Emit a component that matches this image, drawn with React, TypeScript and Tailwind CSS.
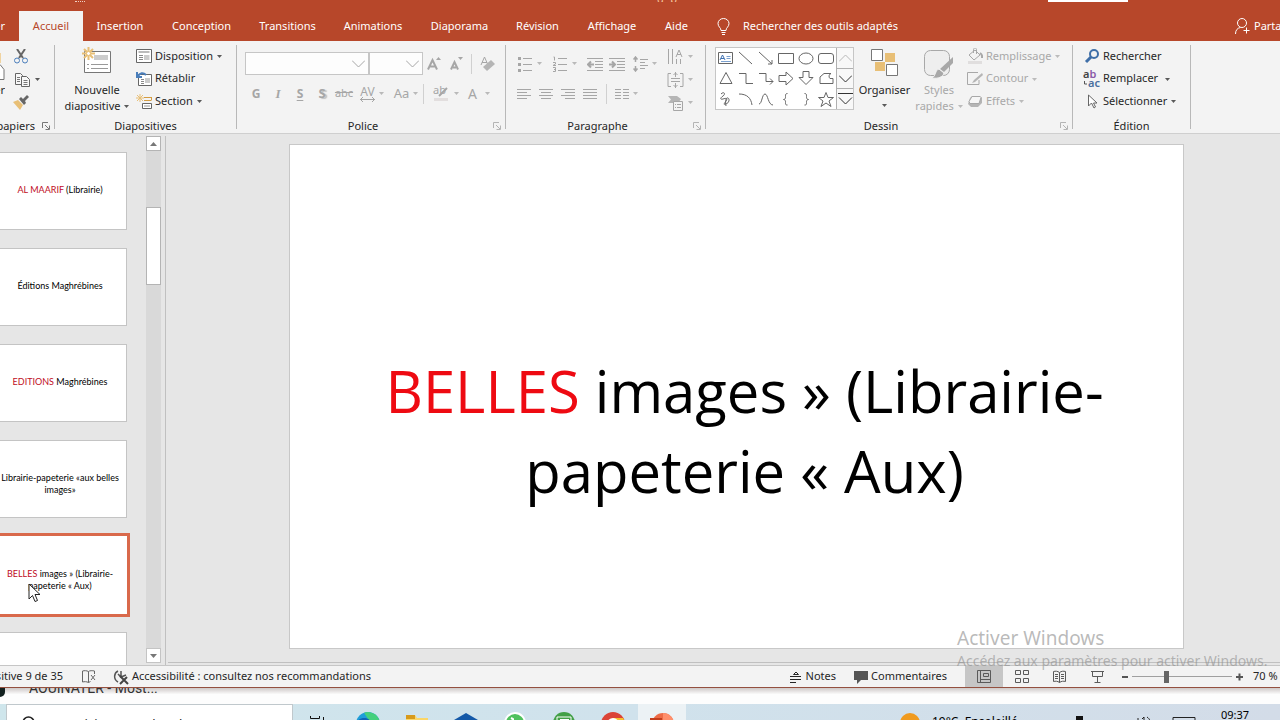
import type { ReactNode } from 'react';

const tabs = [
    { name: 'Insertion', width: 'w-[74px]' },
    { name: 'Conception', width: 'w-[89px]' },
    { name: 'Transitions', width: 'w-[83px]' },
    { name: 'Animations', width: 'w-[88px]' },
    { name: 'Diaporama', width: 'w-[85px]' },
    { name: 'Révision', width: 'w-[71px]' },
    { name: 'Affichage', width: 'w-[78px]' },
    { name: 'Aide', width: 'w-[51px]' },
];

const slides = [
    { red: 'AL MAARIF', lines: [' (Librairie)'] },
    { red: '', lines: ['Éditions Maghrébines'] },
    { red: 'EDITIONS', lines: [' Maghrébines'] },
    { red: '', lines: ['Librairie-papeterie «aux belles', 'images»'] },
    { red: 'BELLES', lines: [' images » (Librairie-', 'papeterie « Aux)'], selected: true },
    { red: '', lines: [''] },
];

// 16x16 outlines of the shape gallery, row by row
const shapes = [
    { name: 'Ligne', d: 'M1 2l13 12' },
    { name: 'Flèche', d: 'M1 2l13 12M14 10v4h-4' },
    { name: 'Rectangle', d: 'M.5 3.5h15v10H.5z' },
    { name: 'Ellipse', d: 'M1 8.5a7 5.5 0 1 0 14 0a7 5.5 0 1 0-14 0' },
    { name: 'Rectangle à coins arrondis', d: 'M3 3.5h10q2.500 0 2.500 2.500v5q0 2.500-2.500 2.500H3Q.5 13.500.5 11V6Q.5 3.500 3 3.500z' },
    { name: 'Triangle', d: 'M8 2.5l6 11H2z' },
    { name: 'Connecteur en angle', d: 'M1 3.5h7v10h7' },
    { name: 'Connecteur avec flèche', d: 'M1 3.5h7v8h7M12 8.5l3 3-3 3' },
    { name: 'Flèche droite', d: 'M1 5.5h7V2l7 6.5-7 6.5v-3.500H1z' },
    { name: 'Flèche vers le bas', d: 'M5 1.500h6v6h4l-7 7-7-7h4z' },
    { name: 'Forme libre', d: 'M6 3.500h7a3 3 0 0 0-1 5h3v5H2V7z' },
    { name: 'Dessin à main levée', d: 'M3 3c3-3 5 0 2 2s-3 4 0 3 5-1 3 2-3 4 0 3 4-5 2-6-3 3-2 8' },
    { name: 'Arc', d: 'M1 3c8 0 12 4 13 11' },
    { name: 'Courbe', d: 'M1 13c3 0 3-10 6-10s3 11 8 11' },
    { name: 'Accolade ouvrante', d: 'M9.500 2.500c-2 0-2 1-2 3s0 2.500-2 3c2 .5 2 1 2 3s0 2.500 2 2.500' },
    { name: 'Accolade fermante', d: 'M6.500 2.500c2 0 2 1 2 3s0 2.500 2 3c-2 .5-2 1-2 3s0 2.500-2 2.500' },
    { name: 'Étoile', d: 'M8 1.500l2 5h5.500l-4.500 3.500 2 5.500-5-3.500-5 3.500 2-5.500L.5 6.500H6z' },
];

function Icon({ children, w = 16, h = 16 }: { children: ReactNode; w?: number; h?: number }) {
    return (
        <svg width={w} height={h} viewBox={`0 0 ${w} ${h}`} fill="none" stroke="currentColor" className="shrink-0" aria-hidden="true">
            {children}
        </svg>
    );
}

function Caret() {
    return (
        <svg width="5" height="3" viewBox="0 0 5 3" className="shrink-0" aria-hidden="true">
            <path d="M0 0h5L2.500 3z" fill="currentColor" opacity=".75" />
        </svg>
    );
}

function Launcher({ dim = false }: { dim?: boolean }) {
    return (
        <button type="button" aria-label="Options" className={`mr-1 ${dim ? 'text-[#b4b4b4]' : 'text-[#777777]'}`}>
            <Icon w={8} h={8}>
                <path d="M.5 6V.5H6M3 3l4 4M7.500 3.500v4h-4" />
            </Icon>
        </button>
    );
}

function Group({ label, launcher, width, children }: { label: ReactNode; launcher?: ReactNode; width: string; children: ReactNode }) {
    return (
        <section className={`flex shrink-0 items-start pt-1 ${width}`}>
            <div className="flex min-w-0 flex-1 flex-col">
                <div className="flex h-[69px] pb-px">{children}</div>
                <div className="flex h-6 items-center">
                    <h2 className="min-w-0 flex-1 pr-1 text-center">{label}</h2>
                    {launcher}
                </div>
            </div>
            <div className="h-[84px] w-px shrink-0 bg-[#b8b8b8]" />
        </section>
    );
}

function RowButton({ icon, label, caret = false, gap = 'gap-1' }: { icon: ReactNode; label: string; caret?: boolean; gap?: string }) {
    return (
        <button type="button" className={`flex h-[23px] items-center whitespace-nowrap ${gap}`}>
            <span className="-mr-px flex w-4 justify-center">{icon}</span>
            <span className="pb-px">{label}</span>
            {caret && <Caret />}
        </button>
    );
}

function Tool({ label, width = 'w-[22px]', caret = false, children }: { label: string; width?: string; caret?: boolean; children: ReactNode }) {
    return (
        <button type="button" aria-label={label} className={`flex h-[23px] shrink-0 items-center justify-center gap-1 ${width}`}>
            {children}
            {caret && <Caret />}
        </button>
    );
}

function Combo({ label, width }: { label: string; width: string }) {
    return (
        <div className={`relative h-[23px] shrink-0 ${width}`}>
            <select aria-label={label} className="h-full w-full appearance-none border border-[#c6c6c6] bg-[#fdfdfd] outline-none" />
            <span className="pointer-events-none absolute top-2 right-1">
                <Icon w={13} h={8}>
                    <path d="M0 .5l6.500 6.500L13 .5" />
                </Icon>
            </span>
        </div>
    );
}

function Header() {
    return (
        <header className="shrink-0 bg-[#b7472a] text-white">
            <div className="flex h-[11px] items-start">
                <div className="ml-[75px] h-[2px] w-[10px] border-b border-dotted border-[#f0d0c4]" />
                <div className="ml-[572px] flex h-[2px] w-5 items-end justify-between overflow-hidden leading-[6px] text-[#f6c7a0]">
                    <span>g</span>
                    <span>p</span>
                </div>
                <div className="mr-[152px] ml-auto h-[2px] w-20 bg-white" />
            </div>
            <nav className="flex h-[30px] items-stretch">
                <a href="#fichier" className="flex w-[19px] items-center justify-end overflow-hidden pr-[14px]">
                    Fichier
                </a>
                <a href="#accueil" className="flex w-16 items-center justify-center bg-[#f3f3f3] text-[#b7472a]">
                    Accueil
                </a>
                {tabs.map((tab) => (
                    <a key={tab.name} href="#ruban" className={`flex shrink-0 items-center justify-center ${tab.width}`}>
                        {tab.name}
                    </a>
                ))}
                <button type="button" className="ml-[15px] flex items-center gap-[13px]">
                    <Icon w={13} h={17}>
                        <path d="M4 12.500c0-3-3-3.500-3-7a5.500 5 0 0 1 11 0c0 3.500-3 4-3 7zM4.500 14.500h4M5 16.500h3" />
                    </Icon>
                    Rechercher des outils adaptés
                </button>
                <button type="button" className="ml-auto flex w-[45px] items-center gap-1 overflow-hidden">
                    <Icon w={15} h={16}>
                        <circle cx="7" cy="5" r="4.500" />
                        <path d="M.5 16c0-4 2-6 5-6.500M11.500 9.500v6M8.500 12.500h6" />
                    </Icon>
                    Partager
                </button>
            </nav>
        </header>
    );
}

function Clipboard() {
    return (
        <Group width="w-[55px]" launcher={<Launcher />} label={<span className="flex w-[35px] justify-end overflow-hidden whitespace-nowrap">Presse-papiers</span>}>
            <button type="button" className="flex w-[5px] flex-col items-end overflow-hidden pt-2">
                <Icon w={12} h={28}>
                    <path d="M6 0h2v10H6z" fill="#f0d3a0" stroke="none" />
                    <path d="M-4 11.500h11l4 5v10H-4" fill="#fff" stroke="#777" />
                </Icon>
                <span className="pt-px">Coller</span>
            </button>
            <div className="flex flex-col pl-2">
                <Tool label="Couper" width="w-4">
                    <Icon>
                        <path d="M4 0l6 9M12 0L6 9" stroke="#666" strokeWidth="2" />
                        <circle cx="4" cy="11.500" r="2.500" stroke="#4a7ebb" />
                        <circle cx="12" cy="11.500" r="2.500" stroke="#4a7ebb" />
                    </Icon>
                </Tool>
                <Tool label="Copier" width="w-7" caret>
                    <Icon>
                        <path d="M.5 1.500h5l2 2v9h-7z" fill="#f8f8f8" stroke="#666" />
                        <path d="M6.500 4.500h5l3 3v7h-8z" fill="#f8f8f8" stroke="#666" />
                        <path d="M2 5.500h3M2 7.500h3M2 9.500h3M8.500 8.500h4M8.500 10.500h4M8.500 12.500h4" stroke="#777" />
                    </Icon>
                </Tool>
                <Tool label="Reproduire la mise en forme" width="w-4">
                    <Icon>
                        <path d="M0 7l5-2 5 5-3 5z" fill="#e8bf76" stroke="none" />
                        <path d="M6 4l2-2 2 2 4-4 2 2-4 4 1 2-2 2z" fill="#666" stroke="none" />
                    </Icon>
                </Tool>
            </div>
        </Group>
    );
}

function SlidesGroup() {
    return (
        <Group width="w-[182px]" label={<span className="pl-1">Diapositives</span>}>
            <button type="button" className="ml-1 flex w-[76px] flex-col items-center pt-0.5 leading-4">
                <Icon w={30} h={28}>
                    <path d="M2.500 4.500h26v21h-26z" fill="#fff" stroke="#777" />
                    <path d="M12 8h14v5H12z" fill="#ccc" stroke="none" />
                    <path d="M5 17.500h2M9 17.500h17M5 21.500h2M9 21.500h17" stroke="#999" />
                    <path d="M6.500 0v13M0 6.500h13M2 2l9 9M11 2l-9 9" stroke="#e8bf76" strokeWidth="2" />
                    <circle cx="6.500" cy="6.500" r="2" fill="#fff" stroke="#e8bf76" />
                </Icon>
                <span className="pt-[7px]">Nouvelle</span>
                <span className="flex items-center gap-1">
                    diapositive
                    <Caret />
                </span>
            </button>
            <div className="flex flex-col items-start pl-px">
                <RowButton
                    label="Disposition"
                    caret
                    icon={
                        <Icon>
                            <path d="M.5 1.500h15v13H.5z" fill="#fff" stroke="#666" />
                            <path d="M2.500 4h11" stroke="#bbb" strokeWidth="2" />
                            <path d="M8 7h5.500v5H8z" fill="#ccc" stroke="none" />
                            <path d="M3 7.500h4M3 9.500h4M3 11.500h4" stroke="#888" />
                        </Icon>
                    }
                />
                <RowButton
                    label="Rétablir"
                    icon={
                        <Icon>
                            <path d="M2.500 3.500h13v11h-13z" fill="#fff" stroke="#666" />
                            <path d="M9 7h5v5H9z" fill="#ccc" stroke="none" />
                            <path d="M5 8.500h3M5 10.500h3M5 12.500h3" stroke="#888" />
                            <path d="M1 1v5h5M1.500 5.500C4 2 7 1 10 4" stroke="#4a7ebb" strokeWidth="2" />
                        </Icon>
                    }
                />
                <RowButton
                    label="Section"
                    caret
                    icon={
                        <Icon>
                            <path d="M4 0v8M0 4h8M1 1l6 6M7 1L1 7" stroke="#e8bf76" />
                            <path d="M8 3.500h8M8 6.500h7M15.500 3.500v3" stroke="#d39c43" />
                            <path d="M6.500 9.500h9v5h-9z" fill="#fff" stroke="#666" />
                            <path d="M8 12h6" stroke="#ccc" strokeWidth="2" />
                        </Icon>
                    }
                />
            </div>
        </Group>
    );
}

function FontGroup() {
    return (
        <Group width="w-[269px]" label="Police" launcher={<Launcher dim />}>
            <div className="flex flex-col gap-[7px] pt-[7px] pl-2 text-[#a6a6a6]">
                <div className="flex items-center">
                    <Combo label="Police" width="w-[124px]" />
                    <Combo label="Taille de police" width="w-[54px]" />
                    <Tool label="Agrandir la police">
                        <Icon>
                            <path d="M2 13.500L6.500 4 11 13.500M4 10.500h5" strokeWidth="2" />
                            <path d="M10 4h5l-2.500-3z" fill="currentColor" stroke="none" />
                        </Icon>
                    </Tool>
                    <Tool label="Réduire la police">
                        <Icon>
                            <path d="M3 13.500L6.500 6l3.500 7.500M5 11.500h3" strokeWidth="2" />
                            <path d="M10 1h5l-2.500 3z" fill="currentColor" stroke="none" />
                        </Icon>
                    </Tool>
                    <div className="ml-1 h-5 w-px bg-[#d0d0d0]" />
                    <Tool label="Effacer la mise en forme" width="w-8">
                        <Icon>
                            <path d="M1 9l3.500-8L8 9M2 6.500h5" />
                            <path d="M3 11l8-7 4 4-8 7z" fill="#b5b5b5" stroke="none" />
                        </Icon>
                    </Tool>
                </div>
                <div className="flex items-center text-[12px]">
                    <Tool label="Gras"><b>G</b></Tool>
                    <Tool label="Italique"><i className="font-['Liberation_Serif',serif] text-[13px] font-bold">I</i></Tool>
                    <Tool label="Souligné"><b className="underline underline-offset-2">S</b></Tool>
                    <Tool label="Ombre"><b className="text-[13px] text-shadow-[2px_1px_1px_#c0c0c0]">S</b></Tool>
                    <Tool label="Barré"><span className="text-[11px] line-through">abc</span></Tool>
                    <Tool label="Espacement des caractères" width="w-[34px]" caret>
                        <span className="flex flex-col items-center leading-[11px]">
                            AV
                            <Icon w={15} h={5}>
                                <path d="M0 2.500h15M3 0L.5 2.500 3 5M12 0l2.500 2.500L12 5" />
                            </Icon>
                        </span>
                    </Tool>
                    <Tool label="Modifier la casse" width="w-[34px]" caret><span className="text-[13px]">Aa</span></Tool>
                    <div className="mr-1 h-5 w-px bg-[#d0d0d0]" />
                    <Tool label="Couleur de surbrillance" width="w-[34px]" caret>
                        <Icon w={18} h={18}>
                            <text x="1" y="9" fontSize="11" fill="currentColor" stroke="none">ab</text>
                            <path d="M15 3L7 11" strokeWidth="2" />
                            <path d="M2 13h14v3H2z" fill="#e2dede" stroke="none" />
                        </Icon>
                    </Tool>
                    <Tool label="Couleur de police" width="w-[34px]" caret><span className="pr-1 text-[14px]">A</span></Tool>
                </div>
            </div>
        </Group>
    );
}

function ParagraphGroup() {
    return (
        <Group width="w-[200px]" label="Paragraphe" launcher={<Launcher dim />}>
            <div className="flex flex-1 flex-col gap-[7px] pt-[7px] pl-[7px] text-[#a6a6a6]">
                <div className="flex items-center">
                    <Tool label="Puces" width="w-[34px]" caret>
                        <Icon w={15}>
                            <path d="M5 2.500h9M5 8.500h9M5 14.500h9" />
                            <path d="M0 2.500h3M0 8.500h3M0 14.500h3" strokeWidth="3" />
                        </Icon>
                    </Tool>
                    <Tool label="Numérotation" width="w-[36px]" caret>
                        <Icon w={15}>
                            <path d="M5 2.500h9M5 8.500h9M5 14.500h9" />
                            <path d="M.5 1h1v3.500M0 6.500h2.500v1.500L0 9.500h3M0 11.500h2.500v4H0M1 13.500h1" />
                        </Icon>
                    </Tool>
                    <Tool label="Réduire le retrait" width="w-[23px]">
                        <Icon>
                            <path d="M0 2.500h16M8 5.500h8M8 8.500h8M8 11.500h8M0 14.500h16" />
                            <path d="M1 8.500h6M4 5.500l-3 3 3 3" strokeWidth="2" />
                        </Icon>
                    </Tool>
                    <Tool label="Augmenter le retrait">
                        <Icon>
                            <path d="M0 2.500h16M8 5.500h8M8 8.500h8M8 11.500h8M0 14.500h16" />
                            <path d="M0 8.500h6M3 5.500l3 3-3 3" strokeWidth="2" />
                        </Icon>
                    </Tool>
                    <Tool label="Interligne" width="w-[34px]" caret>
                        <Icon w={15}>
                            <path d="M2.500 1v5M2.500 10v5M.5 3.500l2-2.500 2 2.500M.5 12.500l2 2.500 2-2.500" strokeWidth="1.500" />
                            <path d="M7 3.500h8M7 6.500h5M7 9.500h8M7 12.500h5" />
                        </Icon>
                    </Tool>
                </div>
                <div className="flex items-center">
                    <Tool label="Aligner à gauche">
                        <Icon w={14}><path d="M0 3.500h14M0 6.500h10M0 9.500h14M0 12.500h10" /></Icon>
                    </Tool>
                    <Tool label="Centrer">
                        <Icon w={14}><path d="M0 3.500h14M2 6.500h10M0 9.500h14M2 12.500h10" /></Icon>
                    </Tool>
                    <Tool label="Aligner à droite">
                        <Icon w={14}><path d="M0 3.500h14M4 6.500h10M0 9.500h14M4 12.500h10" /></Icon>
                    </Tool>
                    <Tool label="Justifier">
                        <Icon w={14}><path d="M0 3.500h14M0 6.500h14M0 9.500h14M0 12.500h14" /></Icon>
                    </Tool>
                    <div className="ml-[5px] h-5 w-px bg-[#d0d0d0]" />
                    <Tool label="Colonnes" width="w-[38px]" caret>
                        <Icon w={14}><path d="M0 3.500h6M0 6.500h6M0 9.500h6M0 12.500h6M8 3.500h6M8 6.500h6M8 9.500h6M8 12.500h6" /></Icon>
                    </Tool>
                </div>
            </div>
            <div className="flex w-[38px] flex-col text-[#a6a6a6]">
                <Tool label="Orientation du texte" width="w-[26px]" caret>
                    <Icon w={17}>
                        <path d="M1.500 0v15M5.500 0v15M9.500 10v5M13.500 10v5M9 8l3-7 3 7M10 5.500h4" />
                    </Icon>
                </Tool>
                <Tool label="Aligner le texte" width="w-[26px]" caret>
                    <Icon w={17}>
                        <path d="M4 1.500H1v13h3M13 1.500h3v13h-3M4 6.500h9M4 9.500h9M8.500 0v5M6.500 3l2-2 2 2M8.500 11v5M6.500 13l2 2 2-2" />
                    </Icon>
                </Tool>
                <Tool label="Convertir en SmartArt" width="w-[26px]" caret>
                    <Icon w={17}>
                        <path d="M1 1h9l4 3-3 4H1l3-3.500z" fill="#b5b5b5" stroke="none" />
                        <path d="M6.500 6.500h9v9h-9z" fill="#f3f3f3" />
                        <path d="M8 9.500h1M10 9.500h4M8 12.500h1M10 12.500h4" />
                    </Icon>
                </Tool>
            </div>
        </Group>
    );
}

function DrawingGroup() {
    return (
        <Group width="w-[367px]" label="Dessin" launcher={<Launcher dim />}>
            <div className="mt-[2px] ml-[9px] flex h-[63px] shrink-0 border border-[#c6c6c6] bg-white text-[#666666]">
                <div className="grid grid-cols-6 grid-rows-3">
                    <button type="button" aria-label="Zone de texte" className="flex w-5 items-center justify-center">
                        <Icon>
                            <path d="M.5 2.500h14v11H.5z" />
                            <path d="M2 10l2.500-5L7 10M3 8.500h3" stroke="#3d6fb0" />
                            <path d="M8.500 6.500h4M8.500 8.500h4M3 11.500h10" stroke="#7aa0cf" />
                        </Icon>
                    </button>
                    {shapes.map((shape) => (
                        <button key={shape.name} type="button" aria-label={shape.name} className="flex w-5 items-center justify-center">
                            <Icon>
                                <path d={shape.d} />
                            </Icon>
                        </button>
                    ))}
                </div>
                <div className="flex w-[17px] flex-col divide-y divide-[#b0b0b0] border-l border-[#b0b0b0] bg-[#f8f8f8]">
                    <button type="button" aria-label="Formes précédentes" className="flex flex-1 items-center justify-center text-[#b8b8b8]">
                        <Icon w={13} h={8}><path d="M0 7.500L6.500 1 13 7.500" /></Icon>
                    </button>
                    <button type="button" aria-label="Formes suivantes" className="flex flex-1 items-center justify-center text-[#333333]">
                        <Icon w={13} h={8}><path d="M0 .5L6.500 7 13 .5" /></Icon>
                    </button>
                    <button type="button" aria-label="Autres formes" className="flex flex-1 items-center justify-center text-[#333333]">
                        <Icon w={15} h={14}><path d="M0 1.500h15" /><path d="M1 5.500l6.500 6.500L14 5.500" /></Icon>
                    </button>
                </div>
            </div>
            <button type="button" className="ml-[3px] flex w-[55px] flex-col items-center pt-1 leading-4">
                <Icon w={28} h={27}>
                    <path d="M14 4h10v9H14zM4 13h10v9H4z" fill="#e8bf76" stroke="none" />
                    <path d="M.5.5h11v11H.5zM15.500 15.500h11v11h-11z" fill="#fff" stroke="#777" />
                </Icon>
                <span className="pt-[6px]">Organiser</span>
                <span className="flex h-4 items-center"><Caret /></span>
            </button>
            <button type="button" className="ml-[2px] flex w-[50px] flex-col items-center pt-1 leading-4 text-[#a8a8a8]">
                <Icon w={30} h={30}>
                    <rect x=".5" y="1.500" width="25" height="25" rx="6" fill="#eee" />
                    <path d="M29 8v6l-9 9-4-3z" fill="#a8a8a8" stroke="none" />
                    <path d="M15 20l5 4c-1 4-6 6-12 5 4-2 3-8 7-9z" fill="#a8a8a8" stroke="#f3f3f3" />
                </Icon>
                <span className="pt-[3px]">Styles</span>
                <span className="flex items-center gap-1">
                    rapides
                    <Caret />
                </span>
            </button>
            <div className="ml-[3px] flex flex-col items-start text-[#a8a8a8]">
                <RowButton
                    label="Remplissage"
                    caret
                    icon={
                        <Icon>
                            <path d="M2 7l6-5 5 5-6 5zM6.500 5V1.500c0-2 3-2 3 0V6" />
                            <path d="M13 5c3 2 2 4 2 5" strokeWidth="2" />
                            <path d="M1 13h14v3H1z" fill="#e0dede" stroke="none" />
                        </Icon>
                    }
                />
                <RowButton
                    label="Contour"
                    caret
                    icon={
                        <Icon>
                            <path d="M11 1.500H.5v12H12V9" />
                            <path d="M15 2l-8 7-2 3 3-1 8-7z" fill="#b5b5b5" stroke="none" />
                        </Icon>
                    }
                />
                <RowButton
                    label="Effets"
                    caret
                    icon={
                        <Icon>
                            <path d="M3 4l2-2h8l2 2v5l-4 4H4L1 10z" fill="#b5b5b5" stroke="none" />
                            <path d="M5 2.500h8l1 1-2 6H3l-1-2z" fill="#f6f6f6" />
                        </Icon>
                    }
                />
            </div>
        </Group>
    );
}

function EditingGroup() {
    return (
        <Group width="w-[118px]" label={<span className="pl-1">Édition</span>}>
            <div className="flex flex-col items-start pl-[11px]">
                <RowButton
                    label="Rechercher"
                    icon={
                        <Icon>
                            <circle cx="10" cy="6" r="4" stroke="#3f6fa8" strokeWidth="2" />
                            <path d="M7 9l-5 5" stroke="#3f6fa8" strokeWidth="3" />
                        </Icon>
                    }
                />
                <RowButton
                    label={'Remplacer\u00a0'}
                    caret
                    icon={
                        <Icon w={18} h={18}>
                            <text x="0" y="8" fontSize="11" fontWeight="600" fill="#444" stroke="none">
                                a<tspan fill="#8a5aa8">b</tspan>
                            </text>
                            <text x="5" y="17" fontSize="11" fontWeight="600" fill="#4a6f9f" stroke="none">ac</text>
                            <path d="M1.500 11v3H4" stroke="#555" />
                        </Icon>
                    }
                />
                <RowButton
                    label="Sélectionner"
                    caret
                    icon={
                        <Icon w={10}>
                            <path d="M1.500 1v11l3-3 2.500 5 1.500-1-2-4h3.500z" fill="#fff" stroke="#666" />
                        </Icon>
                    }
                />
            </div>
        </Group>
    );
}

function Thumbnail({ slide }: { slide: (typeof slides)[number] }) {
    return (
        <button
            type="button"
            className={`-ml-3 h-[78px] w-[139px] shrink-0 border bg-white text-center font-['Lato','Liberation_Sans',sans-serif] text-[9px] leading-3 whitespace-nowrap text-black ${
                slide.selected ? 'border-white outline-3 outline-[#d9694b]' : 'border-[#c4c4c4]'
            }`}
        >
            <span className="flex h-full flex-col items-center pt-[31px] pl-[5px]">
                {slide.lines.map((line, i) => (
                    <span key={line} className="whitespace-pre">
                        {i === 0 && <span className="text-[#c00d1e]">{slide.red}</span>}
                        {line}
                    </span>
                ))}
            </span>
        </button>
    );
}

function SlidePane() {
    return (
        <aside className="relative flex w-[161px] shrink-0">
            <div className="flex min-w-0 flex-1 flex-col gap-[18px] overflow-hidden pt-[18px]">
                {slides.map((slide, i) => (
                    <Thumbnail key={i} slide={slide} />
                ))}
            </div>
            <div className="mt-[2px] mb-[2px] flex w-[15px] shrink-0 flex-col bg-[#d9d9d9] text-[#777777]">
                <button type="button" aria-label="Défiler vers le haut" className="flex h-[15px] items-center justify-center border border-[#b4b4b4] bg-white">
                    <Icon w={7} h={4}><path d="M0 4h7L3.500 0z" fill="currentColor" stroke="none" /></Icon>
                </button>
                <div className="mt-14 h-[78px] border border-[#b4b4b4] bg-white" />
                <button type="button" aria-label="Défiler vers le bas" className="mt-auto flex h-[15px] items-center justify-center border border-[#c4c4c4] bg-white">
                    <Icon w={7} h={4}><path d="M0 0h7L3.500 4z" fill="currentColor" stroke="none" /></Icon>
                </button>
            </div>
            <svg width="13" height="20" viewBox="0 0 13 20" className="absolute top-[449px] left-7" aria-hidden="true">
                <path d="M1 1v15l3.500-3.500L7 18.500l2.500-1-2.500-6H12z" fill="#fff" stroke="#222" />
            </svg>
        </aside>
    );
}

function StatusBar() {
    return (
        <footer className="flex h-[23px] shrink-0 items-center border-t border-b border-t-[#c6c6c6] border-b-[#94503f] bg-[#f3f3f3] text-[#262626]">
            <span className="flex w-[63px] justify-end overflow-hidden whitespace-nowrap">Diapositive 9 de 35</span>
            <button type="button" aria-label="Vérification orthographique" className="ml-[18px] text-[#666666]">
                <Icon>
                    <path d="M7.500 13.500c-2-1-4-1-6-.5v-11c2-.5 4-.5 6 .5zM7.500 2.500c1-1 4-1 6-.5v3M7.500 13.500l2-1M10 6l4 5M14 6l-4 5" />
                </Icon>
            </button>
            <button type="button" className="ml-4 flex items-center gap-[3px] whitespace-nowrap">
                <Icon>
                    <path d="M5 2C1 4 0 10 5 13M8 2v6M5 5l3 3 5-2" stroke="#555" strokeWidth="1.500" />
                    <path d="M7 7l8 8M14 8l-7 7" stroke="#444" strokeWidth="2" />
                </Icon>
                Accessibilité : consultez nos recommandations
            </button>
            <button type="button" className="ml-auto flex items-center gap-1">
                <Icon w={12} h={14}>
                    <path d="M3.500 4.500L6 2l2.500 2.500zM0 6.500h11M0 9.500h11M0 12.500h6" />
                </Icon>
                Notes
            </button>
            <button type="button" className="ml-[18px] flex items-center gap-[3px]">
                <Icon w={14} h={14}>
                    <path d="M0 1h14v9H7l-4 4v-4H0z" fill="#555" stroke="none" />
                </Icon>
                Commentaires
            </button>
            <div className="ml-[18px] flex h-full items-center text-[#5a5a5a]">
                <button type="button" aria-label="Normal" className="flex h-full w-[38px] items-center justify-center bg-[#c6c6c6]">
                    <Icon w={15} h={14}><path d="M.5.5h13v12H.5zM3.500.5v12M6.500 3.500h5v3h-5zM4 9.500h10" /></Icon>
                </button>
                <button type="button" aria-label="Trieuse de diapositives" className="flex w-[38px] justify-center">
                    <Icon w={15} h={14}><path d="M.5.5h5v4h-5zM8.500.5h5v4h-5zM.5 8.500h5v4h-5zM8.500 8.500h5v4h-5z" /></Icon>
                </button>
                <button type="button" aria-label="Mode Lecture" className="flex w-[38px] justify-center">
                    <Icon w={14} h={14}><path d="M6.500 2.500c-2-1.500-4-1.500-6-1v10c2-.5 4-.5 6 1 2-1.500 4-1.500 6-1v-10c-2-.5-4-.5-6 1zv10M2 4.500h3M2 6.500h3M2 8.500h3M8 4.500h3M8 6.500h3M8 8.500h3" /></Icon>
                </button>
                <button type="button" aria-label="Diaporama" className="flex w-[38px] justify-center">
                    <Icon w={14} h={14}><path d="M0 1.500h13M1.500 1.500v5h10v-5M6.500 7v5M3.500 12.500h6" /></Icon>
                </button>
            </div>
            <button type="button" aria-label="Zoom arrière" className="ml-[5px] text-[#555555]">
                <Icon w={6} h={8}><path d="M0 4h6" strokeWidth="2" /></Icon>
            </button>
            <input
                type="range"
                aria-label="Zoom"
                min="10"
                max="170"
                defaultValue="64"
                className="mx-1 h-3 w-[100px] appearance-none bg-[linear-gradient(#a0a0a0,#a0a0a0)] bg-[length:100%_1px] bg-center bg-no-repeat [&::-webkit-slider-thumb]:h-3 [&::-webkit-slider-thumb]:w-[5px] [&::-webkit-slider-thumb]:appearance-none [&::-webkit-slider-thumb]:bg-[#666666]"
            />
            <button type="button" aria-label="Zoom avant" className="text-[#555555]">
                <Icon w={7} h={8}><path d="M0 4h7M3.500 .5v7" strokeWidth="2" /></Icon>
            </button>
            <span className="w-[37px] pl-[10px] whitespace-nowrap">70 %</span>
        </footer>
    );
}

// Browser page that shows between the window and the task bar
function Backdrop() {
    return (
        <div className="flex h-4 shrink-0 items-start overflow-hidden bg-linear-to-b from-[#cfc9c8] to-[#fdfdfd] to-40%">
            <div className="-mt-2 h-[17px] w-[5px] rounded-r-full bg-[#12211f]" />
            <span className="-mt-2 ml-6 font-['Roboto',sans-serif] text-[14px] leading-4 text-[#333333]">AOUINATER - Most...</span>
        </div>
    );
}

function TaskBar() {
    return (
        <div className="flex h-4 shrink-0 items-start overflow-hidden bg-linear-to-r from-[#cfe6ec] via-[#d0e2ec] to-[#d3dce8] text-black">
            <label className="ml-[6px] flex h-10 w-[287px] shrink-0 items-start gap-3 border border-[#c0c8cc] bg-white pt-[11px] pl-[14px]">
                <Icon w={14}>
                    <circle cx="7.500" cy="6.500" r="5.500" stroke="#222" strokeWidth="1.500" />
                </Icon>
                <input placeholder="Taper ici pour rechercher" className="w-[200px] text-[13px] leading-4 outline-none placeholder:text-[#222222]" />
            </label>
            <div className="flex shrink-0 items-start">
                <button type="button" aria-label="Affichage des tâches" className="flex w-12 justify-center pt-3">
                    <Icon><path d="M1.500 0v2.500h9V0M14.500 1v6M1.500 7.500h9" stroke="#111" /></Icon>
                </button>
                <button type="button" aria-label="Edge" className="flex w-[49px] justify-center pt-2 pl-1">
                    <Icon w={24} h={24}>
                        <circle cx="12" cy="12" r="12" fill="#1f9ed8" stroke="none" />
                        <path d="M8 .8A12 12 0 0 1 24 12l-10-2z" fill="#45d07c" stroke="none" />
                        <path d="M0 12c2-7 12-8 15-2-6-2-10 0-12 8z" fill="#1263b5" stroke="none" />
                    </Icon>
                </button>
                <button type="button" aria-label="Explorateur" className="flex w-[49px] justify-center pt-[11px] pl-1">
                    <Icon w={22} h={20}>
                        <path d="M0 0h9l2 3h11v17H0z" fill="#fbd667" stroke="none" />
                        <path d="M0 0h9v4H0z" fill="#d79a1c" stroke="none" />
                    </Icon>
                </button>
                <button type="button" aria-label="Sécurité" className="flex w-[49px] justify-center pt-[9px] pl-1">
                    <Icon w={24} h={22}><path d="M12 0l12 7v15H0V7z" fill="#1459a8" stroke="none" /></Icon>
                </button>
                <button type="button" aria-label="WhatsApp" className="flex w-[49px] justify-center pt-2 pl-1">
                    <Icon w={22} h={22}>
                        <circle cx="11" cy="11" r="10" fill="#4fc15c" stroke="#fff" strokeWidth="2" />
                        <path d="M7 6l2 1v3l4 4 3-1" stroke="#fff" strokeWidth="2" />
                    </Icon>
                </button>
                <button type="button" aria-label="Messages" className="flex w-[49px] justify-center pt-2 pl-1">
                    <Icon w={22} h={22}>
                        <circle cx="11" cy="11" r="11" fill="#43a047" stroke="none" />
                        <path d="M4 5h14v9H4zM7 7.500h9" stroke="#fff" />
                    </Icon>
                </button>
                <button type="button" aria-label="Chrome" className="flex w-[49px] justify-center pt-2 pl-1">
                    <Icon w={24} h={24}>
                        <circle cx="12" cy="12" r="12" fill="#db4437" stroke="none" />
                        <path d="M12 6h10a12 12 0 0 1 2 6H12z" fill="#f7c12f" stroke="none" />
                        <circle cx="12" cy="12" r="5" fill="#4285f4" stroke="#fff" strokeWidth="2" />
                    </Icon>
                </button>
                <button type="button" aria-label="PowerPoint" className="ml-[3px] flex h-10 w-12 justify-center bg-[#ecf2f5] pt-[9px]">
                    <Icon w={24} h={24}>
                        <circle cx="13" cy="11" r="11" fill="#ed6c47" stroke="none" />
                        <path d="M13 0a11 11 0 0 1 11 11H13z" fill="#ff8f6b" stroke="none" />
                        <path d="M0 5h12v13H0z" fill="#c43e1c" stroke="none" />
                    </Icon>
                </button>
            </div>
            <div className="ml-auto flex shrink-0 items-start gap-3 text-[12px]">
                <Icon w={20} h={24}>
                    <circle cx="10" cy="19" r="10" fill="#f09a1e" stroke="none" />
                </Icon>
                <span className="w-[132px] pt-[10px] leading-4">19°C&nbsp; Ensoleillé</span>
                <Icon w={8} h={20}><path d="M0 12h7v8H0z" fill="#111" stroke="none" /></Icon>
                <span className="w-5" />
                <Icon w={32} h={20}><path d="M10 14v6M14 15l2-2v6M19 13c3 2 3 4 3 6" stroke="#222" /></Icon>
                <Icon w={24} h={24}><path d="M1 13.500h22v9H1z" stroke="#222" /></Icon>
            </div>
            <time className="w-[62px] shrink-0 pt-1 pl-4 text-center text-[11px] leading-[13px]">09:37</time>
            <span className="w-[22px] shrink-0" />
        </div>
    );
}

export default function App() {
    return (
        <div className="relative flex h-screen flex-col overflow-hidden bg-[#e6e6e6] font-['Noto_Sans','Open_Sans',sans-serif] text-[11px] text-[#262626]">
            <Header />
            <div className="flex h-[93px] shrink-0 overflow-hidden border-b border-[#cfcfcf] bg-[#f3f3f3]">
                <Clipboard />
                <SlidesGroup />
                <FontGroup />
                <ParagraphGroup />
                <DrawingGroup />
                <EditingGroup />
            </div>
            <div className="flex min-h-0 flex-1">
                <SlidePane />
                <main className="mt-[2px] ml-1 flex min-w-0 flex-1 border-l border-[#c0c0c0]">
                    <div className="mb-[2px] ml-[2px] flex min-w-0 flex-1 border-b border-[#c0c0c0]">
                        <article className="mt-2 mr-24 mb-[13px] ml-[121px] flex-1 border border-[#c8c8c8] bg-white pt-[206px] pl-4 text-center font-['Open_Sans','Noto_Sans',sans-serif] text-[58px] leading-[80px] whitespace-nowrap text-black">
                            <p>
                                <span className="text-[#ee0a12]">BELLES</span> images » (Librairie-
                            </p>
                            <p>papeterie « Aux)</p>
                        </article>
                    </div>
                </main>
            </div>
            <StatusBar />
            <Backdrop />
            <TaskBar />
            <div className="pointer-events-none absolute right-3 bottom-12 w-[311px] whitespace-nowrap text-[#8c8c8c]/60">
                <p className="text-[19px] leading-6">Activer Windows</p>
                <p className="text-[14px] leading-[22px]">Accédez aux paramètres pour activer Windows.</p>
            </div>
        </div>
    );
}
